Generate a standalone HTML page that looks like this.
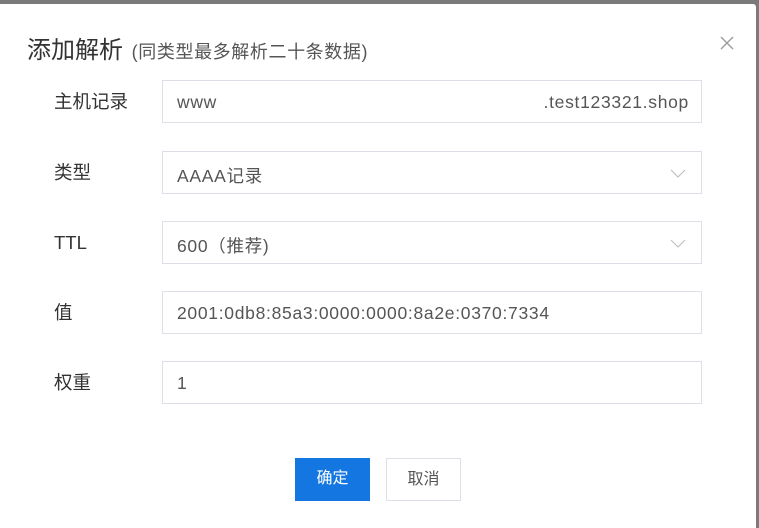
<!DOCTYPE html>
<html><head><meta charset="utf-8"><style>
body{margin:0;width:759px;height:528px;background:#7b7b7b;position:relative;overflow:hidden;font-family:"Liberation Sans","Noto Sans CJK SC",sans-serif}
.dlg{position:absolute;left:0;top:4px;width:756px;height:524px;background:#fff;border-top-right-radius:3px}
.t{position:absolute;left:27px;top:26px;font-size:24px;color:#333;white-space:nowrap}
.t span{font-size:18px;color:#555;letter-spacing:0.6px;margin-left:2px}
.x{position:absolute;left:720px;top:32px}
.l{position:absolute;left:54px;font-size:18.5px;color:#333;line-height:22px}
.i{position:absolute;left:162px;width:540px;height:43px;border:1px solid #dcdfe6;box-sizing:border-box}
.i .v{position:absolute;left:14px;top:11px;font-size:17.5px;color:#555;letter-spacing:0.7px}
.i .r{position:absolute;right:12px;top:11px;font-size:17.5px;color:#555;letter-spacing:0.7px}
.i svg{position:absolute;right:15px;top:17px}
.b{position:absolute;top:454px;height:43px;width:75px;box-sizing:border-box;text-align:center;line-height:42px;font-size:16px}
</style></head><body>
<div class="dlg">
<div class="t">添加解析 <span>(同类型最多解析二十条数据)</span></div>
<svg class="x" width="14" height="14"><path d="M1 1L13 13M13 1L1 13" stroke="#999" stroke-width="1.3"/></svg>
<div class="l" style="top:87px">主机记录</div>
<div class="i" style="top:76px"><span class="v">www</span><span class="r">.test123321.shop</span></div>
<div class="l" style="top:158px">类型</div>
<div class="i" style="top:147px"><span class="v">AAAA记录</span><svg width="16" height="9"><path d="M1 1L8 8L15 1" fill="none" stroke="#bbb" stroke-width="1"/></svg></div>
<div class="l" style="top:228px">TTL</div>
<div class="i" style="top:217px"><span class="v">600（推荐)</span><svg width="16" height="9"><path d="M1 1L8 8L15 1" fill="none" stroke="#bbb" stroke-width="1"/></svg></div>
<div class="l" style="top:298px">值</div>
<div class="i" style="top:287px"><span class="v">2001:0db8:85a3:0000:0000:8a2e:0370:7334</span></div>
<div class="l" style="top:368px">权重</div>
<div class="i" style="top:357px"><span class="v">1</span></div>
<div class="b" style="left:295px;background:#1476e0;color:#fff">确定</div>
<div class="b" style="left:386px;border:1px solid #dcdfe6;color:#555">取消</div>
</div>
</body></html>
